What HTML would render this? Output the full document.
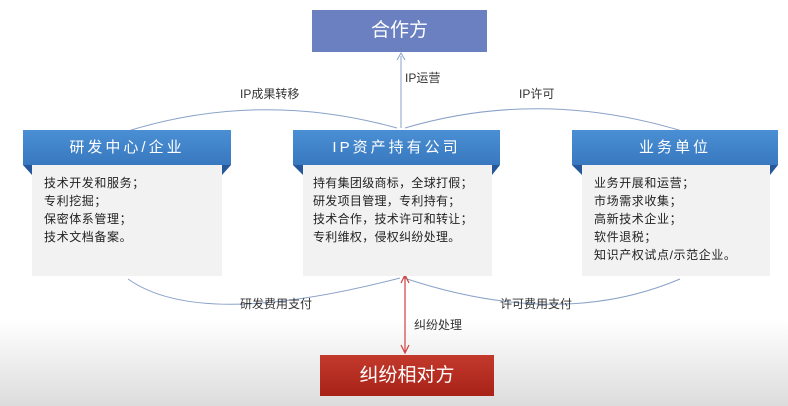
<!DOCTYPE html><html><head><meta charset="utf-8"><style>
body{margin:0;width:788px;height:406px;overflow:hidden;background:#fff;font-family:"Liberation Sans","Noto Sans CJK SC",sans-serif;position:relative}
.a{position:absolute}
.hd{position:absolute;height:35px;background:linear-gradient(#4a8fd4,#3878bf);color:#fff;font-size:15px;letter-spacing:3px;text-align:center;line-height:35px}
.bd{position:absolute;top:165px;height:111px;background:#f2f2f2;font-size:12px;line-height:18px;color:#222;box-sizing:border-box;padding:9px 0 0 12px;letter-spacing:0.6px}
.lb{position:absolute;font-size:12px;color:#333}
.tri{position:absolute;top:165px;width:0;height:0;border-top:10px solid #26579a}
</style></head><body>
<div class="a" style="left:0;top:320px;width:788px;height:86px;background:linear-gradient(#fff,#dcdcdc)"></div>
<div class="a" style="left:312px;top:10px;width:175px;height:42px;background:#6a80c0;color:#fff;font-size:19px;text-align:center;line-height:42px">合作方</div>
<svg class="a" style="left:0;top:0" width="788" height="406">
<g fill="none" stroke="#8aa2c8" stroke-width="1">
<path d="M128 131 Q260 90 397 128"/>
<path d="M405 128 Q540 88 682 131"/>
<path d="M401 128 L401 56"/>
<path d="M128 279 Q200 330 400 278"/>
<path d="M404 278 Q560 330 680 279"/>
</g>
<path d="M397 60 L401 53 L405 60" fill="none" stroke="#8aa2c8"/>
<path d="M405 276 L405 352" stroke="#d04040" stroke-width="1.2"/>
<path d="M401 283 L405 275 L409 283 M401 345 L405 353 L409 345" fill="none" stroke="#d04040" stroke-width="1.2"/>
</svg>
<div class="lb" style="left:240px;top:85px">IP成果转移</div>
<div class="lb" style="left:405px;top:69px">IP运营</div>
<div class="lb" style="left:519px;top:85px">IP许可</div>
<div class="lb" style="left:240px;top:295px">研发费用支付</div>
<div class="lb" style="left:500px;top:295px">许可费用支付</div>
<div class="lb" style="left:414px;top:316px">纠纷处理</div>
<div class="tri" style="left:23px;border-left:9px solid transparent"></div>
<div class="tri" style="left:222px;border-right:9px solid transparent"></div>
<div class="tri" style="left:293px;border-left:10px solid transparent"></div>
<div class="tri" style="left:492px;border-right:8px solid transparent"></div>
<div class="tri" style="left:572px;border-left:10px solid transparent"></div>
<div class="tri" style="left:770px;border-right:8px solid transparent"></div>
<div class="hd" style="left:23px;top:130px;width:208px">研发中心/企业</div>
<div class="hd" style="left:293px;top:130px;width:207px">IP资产持有公司</div>
<div class="hd" style="left:572px;top:130px;width:206px">业务单位</div>
<div class="bd" style="left:32px;width:190px">技术开发和服务；<br>专利挖掘；<br>保密体系管理；<br>技术文档备案。</div>
<div class="bd" style="left:303px;width:189px;padding-left:10px;letter-spacing:0.3px">持有集团级商标，全球打假；<br>研发项目管理，专利持有；<br>技术合作，技术许可和转让；<br>专利维权，侵权纠纷处理。</div>
<div class="bd" style="left:582px;width:188px">业务开展和运营；<br>市场需求收集；<br>高新技术企业；<br>软件退税；<br>知识产权试点/示范企业。</div>
<div class="a" style="left:320px;top:355px;width:174px;height:41px;background:linear-gradient(#c33a2c,#a82218);color:#fff;font-size:19px;text-align:center;line-height:41px">纠纷相对方</div>
</body></html>
